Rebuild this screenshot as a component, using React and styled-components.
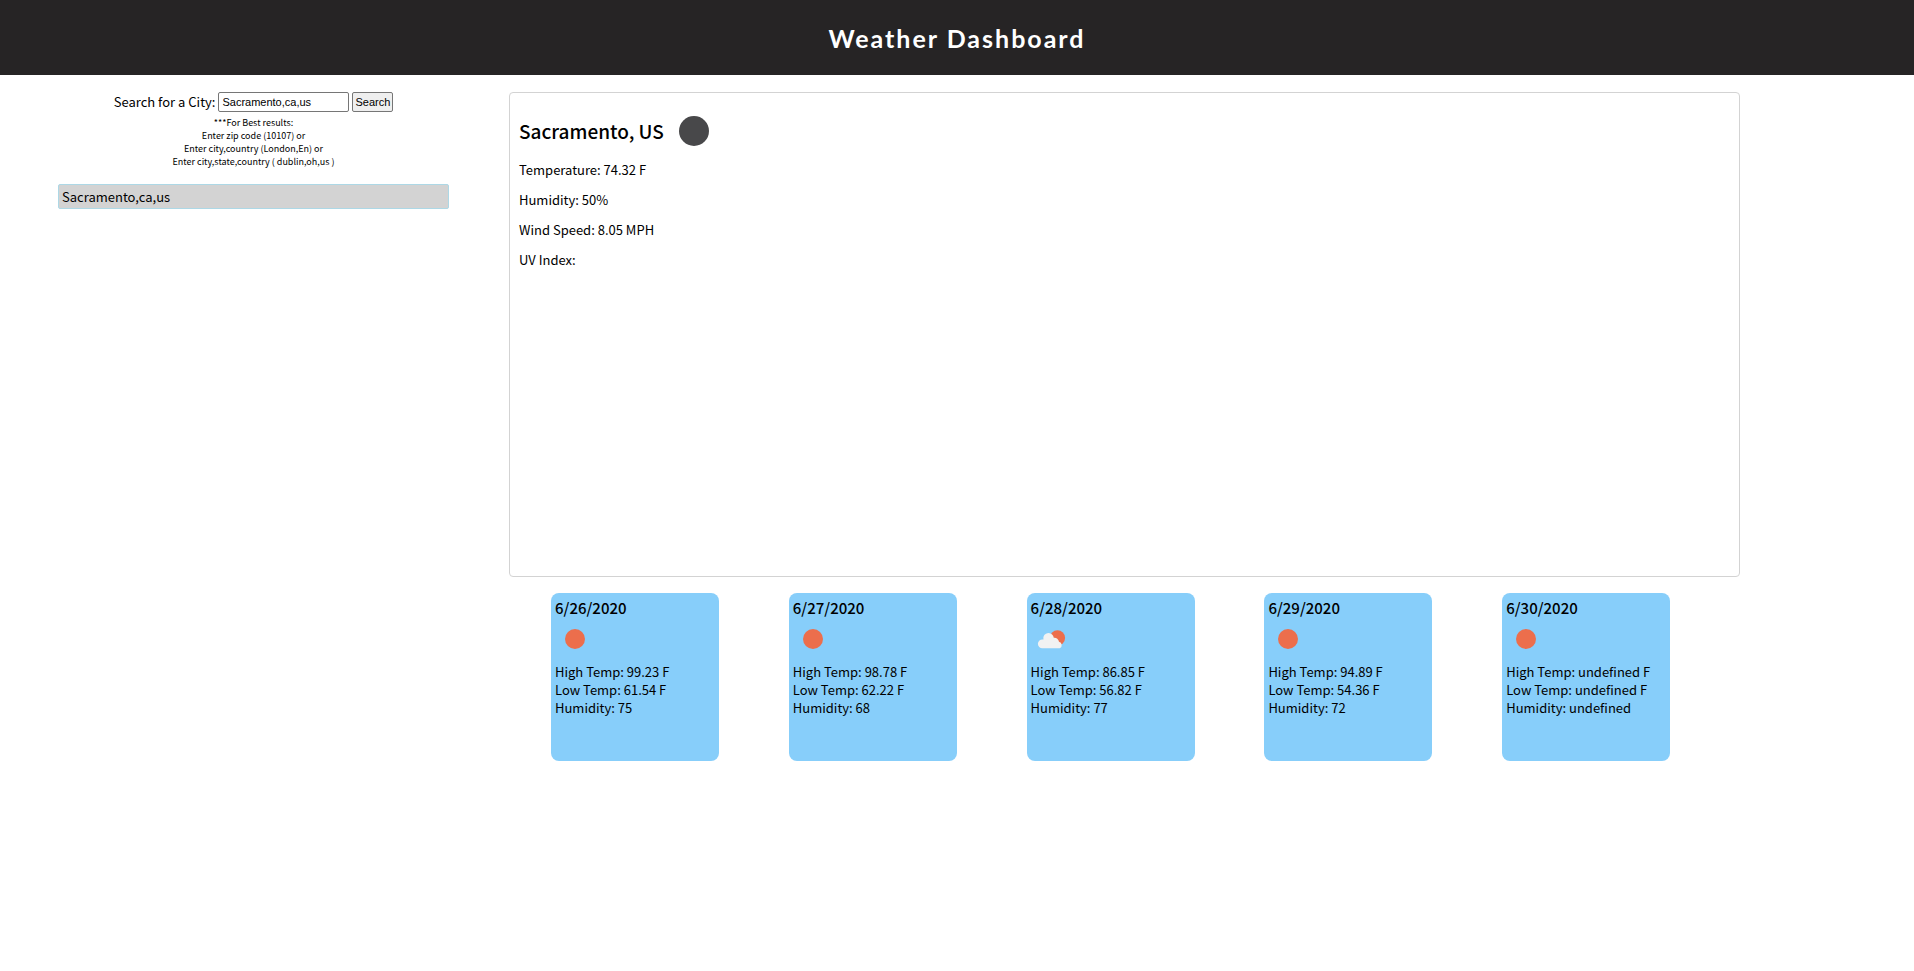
import React, { useState } from "react";
import styled, { createGlobalStyle } from "styled-components";

const GlobalStyle = createGlobalStyle`
  * { box-sizing: border-box; }
  body {
    margin: 0;
    background: #fff;
    color: #000;
    font-family: "Noto Sans CJK SC", "Noto Sans", sans-serif;
    font-size: 13px;
    line-height: 18px;
  }
  h1, h2, h3, p, ul { margin: 0; padding: 0; }
`;

const Header = styled.header`
  display: flex;
  align-items: center;
  justify-content: center;
  height: 75px;
  background: #262425;
`;

const Title = styled.h1`
  color: #fff;
  font-family: Lato, sans-serif;
  font-size: 25px;
  line-height: 30px;
  font-weight: 700;
  letter-spacing: 2px;
`;

const Page = styled.div`
  display: grid;
  grid-template-columns: minmax(0, 391fr) minmax(0, 1231fr);
  column-gap: 60px;
  align-items: start;
  padding: 17px 174px 24px 58px;
`;

const Sidebar = styled.aside`
  display: flex;
  flex-direction: column;
`;

const SearchForm = styled.form`
  display: flex;
  align-items: center;
  justify-content: center;
  flex-wrap: wrap;
  gap: 3px;
`;

const SearchInput = styled.input`
  width: 131px;
  height: 20px;
  padding: 1px 3px;
  border: 1px solid #767676;
  border-radius: 2px;
  background: #fff;
  color: #000;
  font: 11px/14px "Liberation Sans", Arial, sans-serif;
`;

const SearchButton = styled.button`
  height: 20px;
  padding: 1px 2px;
  border: 1px solid #767676;
  border-radius: 2px;
  background: #efefef;
  color: #000;
  font: 11px/14px "Liberation Sans", Arial, sans-serif;
`;

const Hint = styled.p`
  margin-top: 4px;
  text-align: center;
  font-size: 9px;
  line-height: 13px;
`;

const HistoryList = styled.ul`
  margin-top: 16px;
  list-style: none;
`;

const HistoryItem = styled.li`
  padding: 3px;
  border: 1px solid lightblue;
  border-radius: 2px;
  background: lightgray;
  line-height: 17px;
`;

const Main = styled.main`
  display: flex;
  flex-direction: column;
  gap: 16px;
`;

const Current = styled.section`
  display: flex;
  flex-direction: column;
  gap: 12px;
  min-height: 485px;
  padding: 20px 9px;
  border: 1px solid lightgray;
  border-radius: 4px;
`;

const CityRow = styled.div`
  display: flex;
  align-items: center;
  gap: 12px;
  height: 36px;
`;

const City = styled.h2`
  font-size: 19px;
  line-height: 30px;
  font-weight: 500;
`;

const Forecast = styled.section`
  display: grid;
  grid-template-columns: repeat(5, minmax(0, 1fr));
  padding-left: 42px;
`;

const Day = styled.article`
  width: 168px;
  height: 168px;
  padding: 4px;
  border-radius: 8px;
  background: lightskyblue;
`;

const DayDate = styled.h3`
  font-size: 15px;
  line-height: 22px;
  font-weight: 500;
`;

const Icon = styled.svg`
  display: block;
  width: 36px;
  height: 36px;
`;

const DayIcon = styled.div`
  height: 44px;
  padding: 2px;
`;

const icons = {
  night: <circle cx="18" cy="18" r="15" fill="#48484a" />,
  sun: <circle cx="18" cy="18" r="10" fill="#ec6e4c" />,
  cloud: (
    <>
      <circle cx="24.5" cy="16.8" r="7.6" fill="#ec6e4c" />
      <path
        d="M9.3 27.2a4.4 4.4 0 0 1 0-8.8h1.2a5.2 5.2 0 0 1 8.6-5q1.4 1.2 1.7 3.3a4.6 4.6 0 0 1 5.2 4.1a3.4 3.4 0 0 1 .8 6.4Z"
        fill="#f2f2f2"
      />
    </>
  ),
};

function WeatherIcon({ kind, label }) {
  return (
    <Icon viewBox="0 0 36 36" role="img" aria-label={label}>
      {icons[kind]}
    </Icon>
  );
}

const days = [
  { date: "6/26/2020", icon: "sun", high: "99.23", low: "61.54", humidity: "75" },
  { date: "6/27/2020", icon: "sun", high: "98.78", low: "62.22", humidity: "68" },
  { date: "6/28/2020", icon: "cloud", high: "86.85", low: "56.82", humidity: "77" },
  { date: "6/29/2020", icon: "sun", high: "94.89", low: "54.36", humidity: "72" },
  { date: "6/30/2020", icon: "sun", high: "undefined", low: "undefined", humidity: "undefined" },
];

export default function App() {
  const [query, setQuery] = useState("Sacramento,ca,us");
  return (
    <>
      <GlobalStyle />
      <Header>
        <Title>Weather Dashboard</Title>
      </Header>
      <Page>
        <Sidebar>
          <SearchForm onSubmit={(e) => e.preventDefault()}>
            <label htmlFor="city">Search for a City:</label>
            <SearchInput id="city" type="text" value={query} onChange={(e) => setQuery(e.target.value)} />
            <SearchButton type="submit">Search</SearchButton>
          </SearchForm>
          <Hint>
            ***For Best results:
            <br />
            Enter zip code (10107) or
            <br />
            Enter city,country (London,En) or
            <br />
            Enter city,state,country ( dublin,oh,us )
          </Hint>
          <HistoryList>
            <HistoryItem>Sacramento,ca,us</HistoryItem>
          </HistoryList>
        </Sidebar>
        <Main>
          <Current>
            <CityRow>
              <City>Sacramento, US</City>
              <WeatherIcon kind="night" label="Clear night" />
            </CityRow>
            <p>Temperature: 74.32 F</p>
            <p>Humidity: 50%</p>
            <p>Wind Speed: 8.05 MPH</p>
            <p>UV Index:</p>
          </Current>
          <Forecast>
            {days.map((d) => (
              <Day key={d.date}>
                <DayDate>{d.date}</DayDate>
                <DayIcon>
                  <WeatherIcon kind={d.icon} label={d.icon} />
                </DayIcon>
                <p>High Temp: {d.high} F</p>
                <p>Low Temp: {d.low} F</p>
                <p>Humidity: {d.humidity}</p>
              </Day>
            ))}
          </Forecast>
        </Main>
      </Page>
    </>
  );
}
